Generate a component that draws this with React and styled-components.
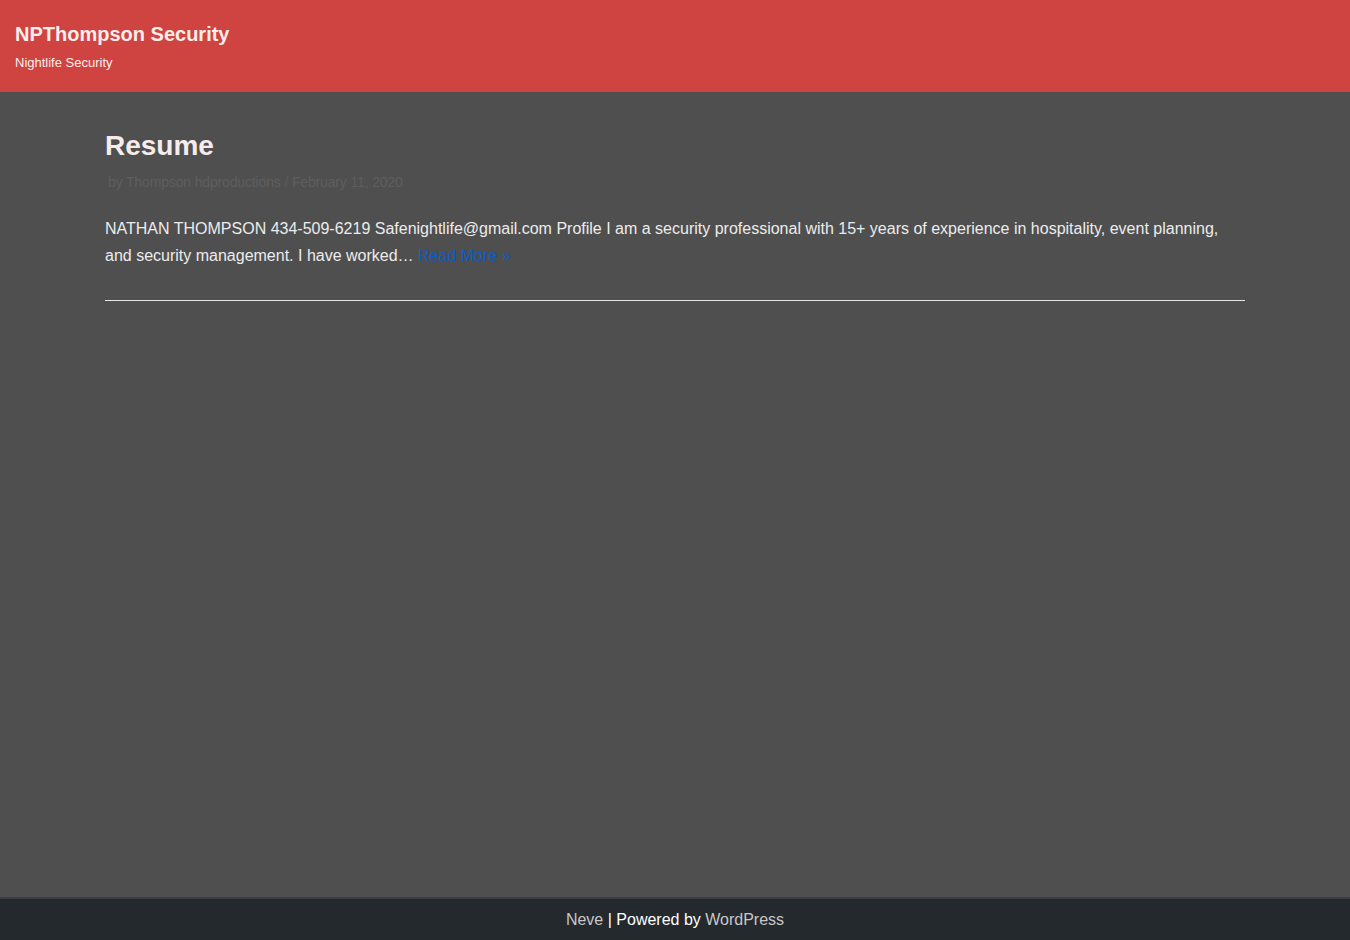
import styled, { createGlobalStyle } from "styled-components";

const Global = createGlobalStyle`
  html, body { margin: 0; padding: 0; }
  body {
    font-family: "Liberation Sans", Arial, sans-serif;
    background: #4f4f4f;
  }
  #root { min-height: 100vh; display: flex; flex-direction: column; }
`;

const Header = styled.header`
  background: #cf4440;
  height: 92px;
  padding: 2px 15px 0;
  display: flex;
  flex-direction: column;
  justify-content: center;
  box-sizing: border-box;
`;

const SiteTitle = styled.h1`
  margin: 0;
  font-size: 20px;
  font-weight: 700;
  color: #fbeeec;
  line-height: 24px;
`;

const Tagline = styled.p`
  margin: 8px 0 0;
  font-size: 13px;
  color: #fbeeec;
  line-height: 18px;
`;

const Main = styled.main`
  flex: 1;
  background: #4f4f4f;
`;

const Container = styled.div`
  width: 1140px;
  margin: 0 auto;
  padding-top: 36px;
`;

const Article = styled.article`
  border-bottom: 1px solid #e6e6e6;
  padding-bottom: 31px;
`;

const Title = styled.h2`
  margin: 0;
  font-size: 28px;
  line-height: 36px;
  font-weight: 700;
  color: #f6ecec;
`;

const Meta = styled.div`
  margin-top: 8px;
  font-size: 14px;
  line-height: 20px;
  color: #5e5e5e;
  padding-left: 3px;
  letter-spacing: -0.15px;
`;

const Excerpt = styled.p`
  margin: 23px 0 0;
  font-size: 16px;
  line-height: 27px;
  color: #ececec;
`;

const ReadMore = styled.a`
  color: #0b5cc4;
  text-decoration: none;
`;

const Footer = styled.footer`
  background: #24292e;
  border-top: 2px solid #3a3d41;
  height: 43px;
  box-sizing: border-box;
  display: flex;
  align-items: center;
  justify-content: center;
  font-size: 16px;
  color: #ffffff;
`;

const FootLink = styled.a`
  color: #c8c8c8;
  text-decoration: none;
`;

export default function App() {
  return (
    <>
      <Global />
      <Header>
        <SiteTitle>NPThompson Security</SiteTitle>
        <Tagline>Nightlife Security</Tagline>
      </Header>
      <Main>
        <Container>
          <Article>
            <Title>Resume</Title>
            <Meta>by Thompson hdproductions / February 11, 2020</Meta>
            <Excerpt>
              NATHAN THOMPSON 434-509-6219 Safenightlife@gmail.com Profile I am a
              security professional with 15+ years of experience in hospitality,
              event planning, and security management. I have worked…{" "}
              <ReadMore href="#">Read More »</ReadMore>
            </Excerpt>
          </Article>
        </Container>
      </Main>
      <Footer>
        <FootLink href="#">Neve</FootLink>&nbsp;| Powered by&nbsp;
        <FootLink href="#">WordPress</FootLink>
      </Footer>
    </>
  );
}
